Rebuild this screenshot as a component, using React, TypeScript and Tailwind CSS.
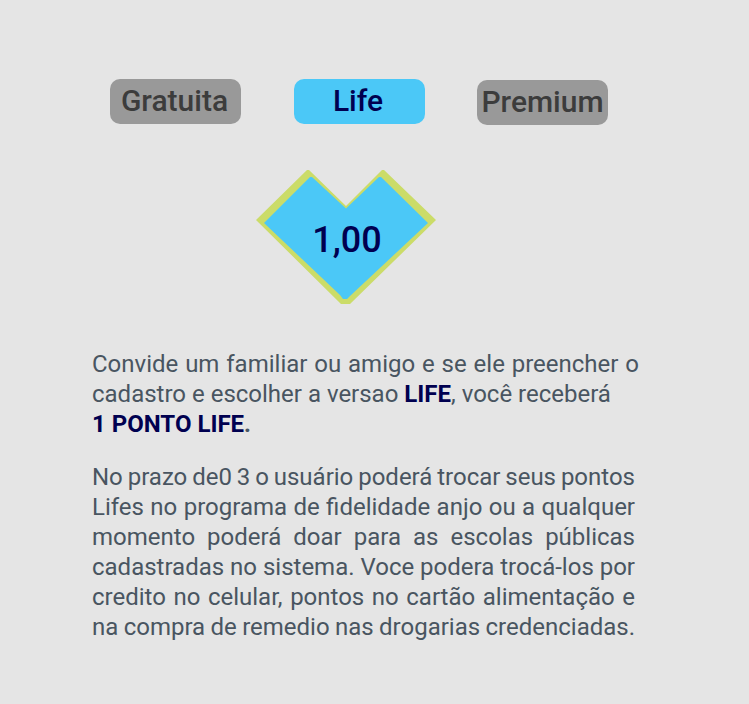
const PLANS = [
  { label: 'Gratuita', className: 'bg-[#999999] text-[#3c3c3c] pr-[2px]' },
  { label: 'Life', className: 'bg-[#4bc8f7] text-[#000050] pr-[2px]' },
  { label: 'Premium', className: 'bg-[#999999] text-[#3c3c3c] mt-px' },
]

export default function App() {
  return (
    <div className="h-[704px] w-[749px] overflow-hidden bg-[#e5e5e5] pt-[79px] font-['Roboto',sans-serif]">
      <div className="ml-[110px] flex w-[498px] items-start justify-between">
        {PLANS.map(plan => (
          <div
            key={plan.label}
            className={`flex h-[45px] w-[131px] items-center justify-center rounded-[10px] pb-[2px] text-[30px] font-medium ${plan.className}`}
          >
            {plan.label}
          </div>
        ))}
      </div>

      <div className="relative ml-[256px] mt-[45px] h-[135px] w-[180px]">
        <svg width="180" height="135" viewBox="0 0 180 135" className="block overflow-visible">
          <polygon points="51,0 53,0 90,36 126,0 128,0 180,50 94,134 85,134 0,50" fill="#cbdc68" />
          <polygon points="54,7 56,7 90,38.5 123,7 125,7 172,53 94,126 91,129 87,129 84,125 8,53" fill="#4bc8f7" />
        </svg>
        <div className="absolute inset-x-0 top-[49px] text-center text-[36px] font-medium leading-[42px] text-[#000050]">
          <span className="ml-[2px]">1,00</span>
        </div>
      </div>

      <div className="ml-[92px] mt-[44px] text-[24px] leading-[30px] text-[#495561]">
        <p className="w-[547px] text-justify">
          Convide um familiar ou amigo e se ele preencher o cadastro e escolher a versao{' '}
          <strong className="font-bold text-[#000050]">LIFE</strong>, você receberá
          <br />
          <strong className="font-bold text-[#000050]">1 PONTO LIFE</strong>
          <strong className="font-bold">.</strong>
        </p>
        <p className="mt-[23px] w-[543px] text-justify [text-align-last:justify] [word-spacing:-1.1px]">
          No prazo de0 3 o usuário poderá trocar seus pontos Lifes no programa de fidelidade anjo ou a qualquer momento poderá doar para as escolas públicas cadastradas no sistema. Voce podera trocá-los por credito no celular, pontos no cartão alimentação e na compra de remedio nas drogarias credenciadas.
        </p>
      </div>
    </div>
  )
}
